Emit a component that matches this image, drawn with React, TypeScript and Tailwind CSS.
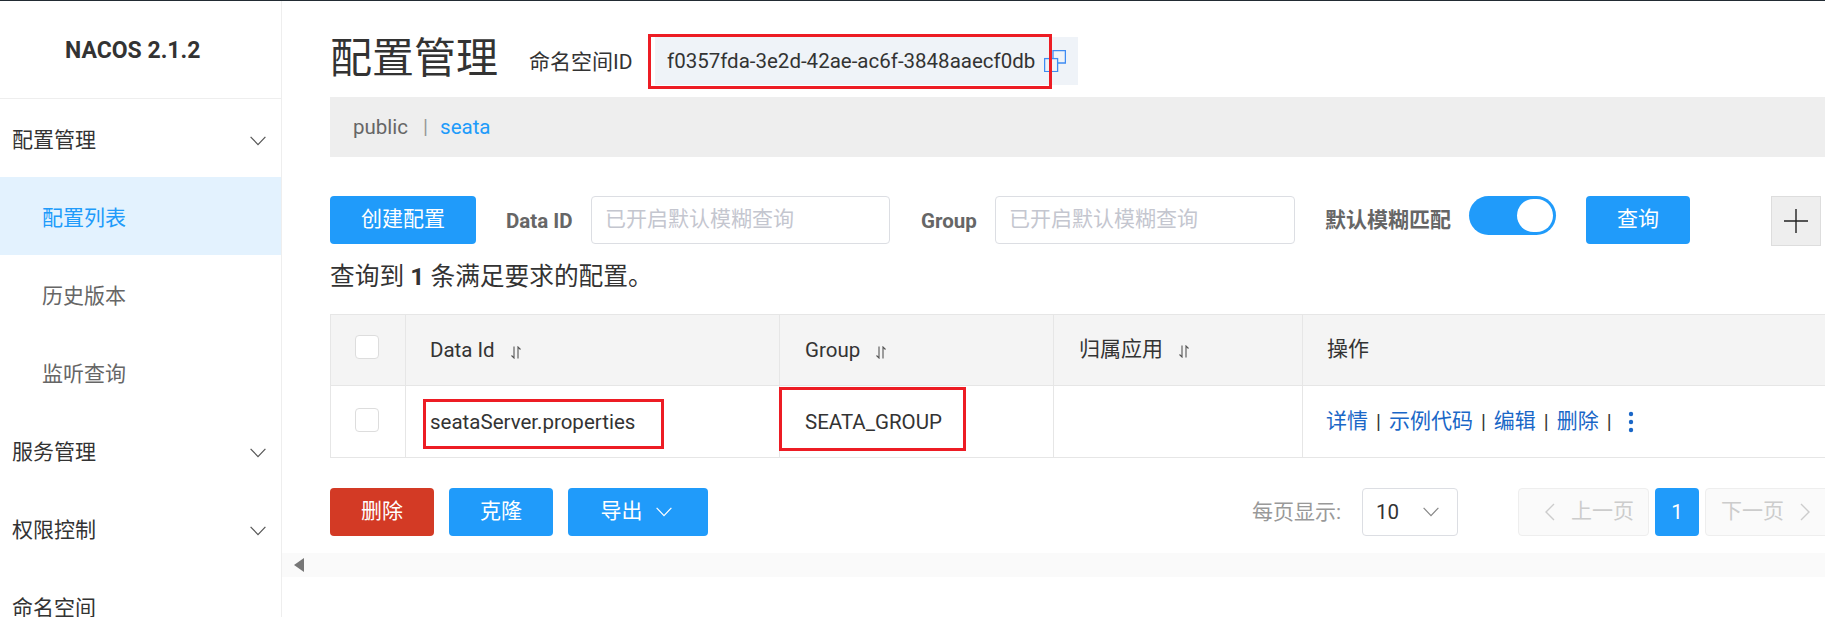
import React from 'react'

const cjk = { fontFamily: 'Roboto, "Noto Sans CJK SC", sans-serif' }

function Chevron({ className }: { className: string }) {
  return (
    <svg viewBox="0 0 16 10" className={className} fill="none" stroke="currentColor" strokeWidth="1.2">
      <path d="M0.6 0.8 L8 8.6 L15.4 0.8" />
    </svg>
  )
}

function SortIcon() {
  return (
    <svg viewBox="0 0 12 13" className="w-[12px] h-[13px] ml-[15px] mt-[3px] text-[#555]" fill="none" stroke="currentColor" strokeWidth="1.1">
      <path d="M4 0.5 V12 L1.5 9.5" />
      <path d="M8 12.5 V1 L10.5 3.5" />
    </svg>
  )
}

function CheckBox() {
  return <div className="w-[24px] h-[24px] bg-white border border-[#ddd] rounded-[4px]" />
}

function MenuGroup({ label, arrow = true }: { label: string; arrow?: boolean }) {
  return (
    <div className="h-[78px] flex items-center justify-between pl-[12px] pr-[15px] pt-[5px] text-[21px] text-[#333]">
      <span>{label}</span>
      {arrow && <Chevron className="w-[16px] h-[10px] text-[#555]" />}
    </div>
  )
}

function MenuItem({ label, active }: { label: string; active?: boolean }) {
  return (
    <div
      className={`h-[78px] flex items-center pl-[42px] pt-[5px] text-[21px] ${
        active ? 'bg-[#e3f2fe] text-[#209bfa]' : 'text-[#666]'
      }`}
    >
      {label}
    </div>
  )
}

function PrimaryButton({ children, className }: { children: React.ReactNode; className: string }) {
  return (
    <button className={`h-[48px] shrink-0 flex items-center justify-center rounded-[4px] text-[21px] text-white ${className}`}>
      {children}
    </button>
  )
}

function SearchInput({ className }: { className: string }) {
  return (
    <div className={`h-[48px] shrink-0 flex items-center border border-[#dcdee3] rounded-[4px] bg-white pl-[13px] text-[21px] text-[#c4c6cf] ${className}`}>
      已开启默认模糊查询
    </div>
  )
}

function App() {
  return (
    <div style={cjk} className="relative w-[1825px] h-[617px] overflow-hidden bg-white text-[#333] border-t border-[#222b33]">
      <div className="flex h-[616px]">
        <aside className="w-[282px] shrink-0 border-r border-[#eee] overflow-hidden">
          <div className="h-[98px] border-b border-[#eee] flex items-center pl-[65px] pt-[4px] text-[23px] font-bold text-[#333] whitespace-nowrap">
            NACOS 2.1.2
          </div>
          <MenuGroup label="配置管理" />
          <MenuItem label="配置列表" active />
          <MenuItem label="历史版本" />
          <MenuItem label="监听查询" />
          <MenuGroup label="服务管理" />
          <MenuGroup label="权限控制" />
          <MenuGroup label="命名空间" arrow={false} />
        </aside>

        <main className="flex-1 min-w-0 pl-[48px] overflow-hidden">
          <div className="h-[96px] flex items-start">
            <h1 className="mt-[28px] text-[42px] leading-[60px] w-[168px] shrink-0 font-normal whitespace-nowrap">配置管理</h1>
            <span className="ml-[31px] mt-[46px] w-[102px] shrink-0 text-[21px] leading-[30px] whitespace-nowrap">命名空间ID</span>
            <div className="ml-[24px] mt-[36px] w-[423px] h-[48px] shrink-0 bg-[#eff3f8] flex items-center pl-[12px] text-[20.5px] text-[#333]">
              f0357fda-3e2d-42ae-ac6f-3848aaecf0db
              <svg viewBox="0 0 22 22" className="w-[22px] h-[22px] ml-[9px] shrink-0 text-[#3f8cf2]" fill="none" stroke="currentColor" strokeWidth="1.3">
                <rect x="0.6" y="8.6" width="13" height="13" />
                <path d="M9 8 V0.6 H21.4 V13 H14" />
              </svg>
            </div>
          </div>

          <div className="h-[60px] bg-[#eee] flex items-center pl-[23px] text-[20.5px]">
            <span className="text-[#666]">public</span>
            <span className="ml-[15px] text-[#999]">|</span>
            <span className="ml-[12px] text-[#209bfa]">seata</span>
          </div>

          <div className="mt-[39px] h-[48px] flex items-start">
            <PrimaryButton className="w-[146px] bg-[#209bfa]">创建配置</PrimaryButton>
            <span className="ml-[30px] w-[66px] shrink-0 text-[20.5px] leading-[50px] font-bold text-[#666] whitespace-nowrap">Data ID</span>
            <SearchInput className="ml-[19px] w-[299px]" />
            <span className="ml-[31px] w-[56px] shrink-0 text-[20.5px] leading-[50px] font-bold text-[#666]">Group</span>
            <SearchInput className="ml-[18px] w-[300px]" />
            <span className="ml-[30px] w-[126px] shrink-0 text-[21px] leading-[48px] font-bold text-[#666] whitespace-nowrap">默认模糊匹配</span>
            <div className="ml-[18px] w-[87px] h-[39px] shrink-0 rounded-full bg-[#209bfa] flex items-center justify-end pr-[3px]">
              <div className="w-[36px] h-[33px] rounded-full bg-white" />
            </div>
            <PrimaryButton className="ml-[30px] w-[104px] bg-[#209bfa]">查询</PrimaryButton>
            <button className="ml-[81px] w-[50px] h-[50px] shrink-0 bg-[#eee] border border-[#ddd] flex items-center justify-center">
              <svg viewBox="0 0 24 24" className="w-[24px] h-[24px]" stroke="#222" strokeWidth="1.4">
                <path d="M0 12 H24 M12 0 V24" />
              </svg>
            </button>
          </div>

          <p className="mt-[15px] h-[36px] text-[24.7px] leading-[36px] whitespace-nowrap">
            查询到 <strong className="font-bold">1</strong> 条满足要求的配置。
          </p>

          <div className="mt-[19px] grid grid-cols-[75px_374px_274px_249px_1fr] border-y border-[#e6e6e6] border-l">
            <div className="h-[71px] bg-[#f4f4f4] border-r border-b border-[#e6e6e6] flex items-center justify-center pb-[6px] pr-[2px]">
              <CheckBox />
            </div>
            <div className="h-[71px] bg-[#f4f4f4] border-r border-b border-[#e6e6e6] flex items-center pl-[24px] pt-[1px] text-[20.5px]">
              Data Id
              <SortIcon />
            </div>
            <div className="h-[71px] bg-[#f4f4f4] border-r border-b border-[#e6e6e6] flex items-center pl-[25px] pt-[1px] text-[20.5px]">
              Group
              <SortIcon />
            </div>
            <div className="h-[71px] bg-[#f4f4f4] border-r border-b border-[#e6e6e6] flex items-center pl-[25px] text-[21px]">
              归属应用
              <SortIcon />
            </div>
            <div className="h-[71px] bg-[#f4f4f4] border-b border-[#e6e6e6] flex items-center pl-[24px] text-[21px]">操作</div>

            <div className="h-[71px] border-r border-[#e6e6e6] flex items-center justify-center pb-[4px] pr-[2px]">
              <CheckBox />
            </div>
            <div className="h-[71px] border-r border-[#e6e6e6] flex items-center pl-[24px] pt-[1px] text-[20.5px]">seataServer.properties</div>
            <div className="h-[71px] border-r border-[#e6e6e6] flex items-center pl-[25px] pt-[1px] text-[20.5px]">SEATA_GROUP</div>
            <div className="h-[71px] border-r border-[#e6e6e6]" />
            <div className="h-[71px] flex items-center pl-[23px] text-[21px] text-[#1a67c7]">
              <span>详情</span>
              <span className="mx-[8px] text-[#333] text-[20px]">|</span>
              <span>示例代码</span>
              <span className="mx-[8px] text-[#333] text-[20px]">|</span>
              <span>编辑</span>
              <span className="mx-[8px] text-[#333] text-[20px]">|</span>
              <span>删除</span>
              <span className="ml-[8px] text-[#333] text-[20px]">|</span>
              <svg viewBox="0 0 6 22" className="w-[6px] h-[22px] ml-[16px]" fill="#1a67c7">
                <circle cx="3" cy="3" r="2.2" />
                <circle cx="3" cy="11" r="2.2" />
                <circle cx="3" cy="19" r="2.2" />
              </svg>
            </div>
          </div>

          <div className="mt-[30px] h-[48px] flex items-start">
            <PrimaryButton className="w-[104px] bg-[#d33a25]">删除</PrimaryButton>
            <PrimaryButton className="ml-[15px] w-[104px] bg-[#209bfa]">克隆</PrimaryButton>
            <PrimaryButton className="ml-[15px] w-[140px] bg-[#209bfa] pr-[4px]">
              导出
              <Chevron className="w-[16px] h-[10px] ml-[13px] text-white" />
            </PrimaryButton>
            <span className="ml-[544px] w-[110px] shrink-0 text-[21px] leading-[48px] text-[#999] whitespace-nowrap">每页显示:</span>
            <div className="w-[96px] h-[48px] shrink-0 border border-[#dcdee3] rounded-[4px] flex items-center justify-between pl-[13px] pr-[18px] text-[20.5px]">
              10
              <Chevron className="w-[16px] h-[10px] text-[#888]" />
            </div>
            <div className="ml-[60px] w-[131px] h-[48px] shrink-0 border border-[#eee] bg-[#fafafa] rounded-[4px] flex items-center pl-[26px] text-[21px] text-[#ccc]">
              <svg viewBox="0 0 10 18" className="w-[10px] h-[18px] mr-[16px]" fill="none" stroke="currentColor" strokeWidth="1.4">
                <path d="M9 1 L1 9 L9 17" />
              </svg>
              上一页
            </div>
            <div className="ml-[6px] w-[44px] h-[48px] shrink-0 bg-[#209bfa] rounded-[4px] flex items-center justify-center text-[20.5px] text-white">1</div>
            <div className="ml-[6px] w-[131px] h-[48px] shrink-0 border border-[#eee] bg-[#fafafa] rounded-[4px] flex items-center pl-[15px] text-[21px] text-[#ccc]">
              下一页
              <svg viewBox="0 0 10 18" className="w-[10px] h-[18px] ml-[16px]" fill="none" stroke="currentColor" strokeWidth="1.4">
                <path d="M1 1 L9 9 L1 17" />
              </svg>
            </div>
          </div>

          <div className="mt-[17px] -ml-[48px] h-[24px] bg-[#fafafa] flex items-center pl-[12px]">
            <svg viewBox="0 0 10 14" className="w-[10px] h-[14px]" fill="#777">
              <path d="M10 0 V14 L0 7 Z" />
            </svg>
          </div>
        </main>
      </div>

      {/* red marks drawn over the screenshot */}
      <div className="absolute left-[648px] top-[33px] w-[404px] h-[55px] border-[3px] border-[#ed1c24]" />
      <div className="absolute left-[423px] top-[398px] w-[241px] h-[50px] border-[3px] border-[#ed1c24]" />
      <div className="absolute left-[779px] top-[386px] w-[187px] h-[64px] border-[3px] border-[#ed1c24]" />
    </div>
  )
}

export default App
